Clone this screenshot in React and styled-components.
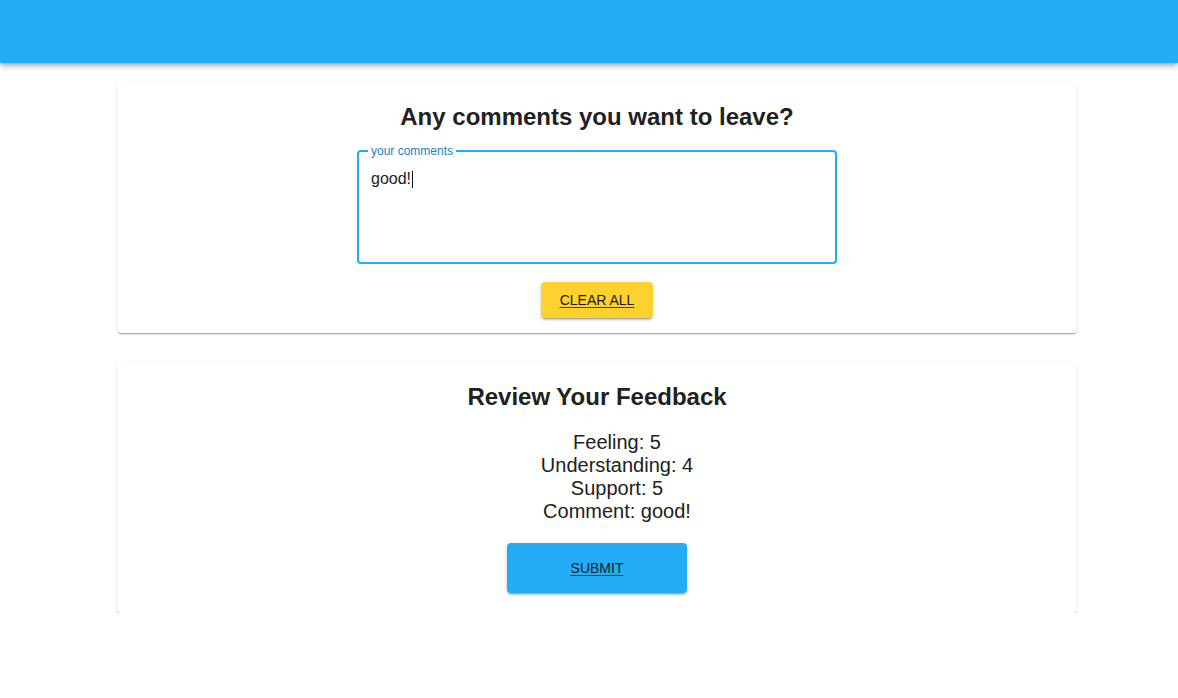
import React from "react";
import styled, { createGlobalStyle } from "styled-components";

const Global = createGlobalStyle`
  html, body { margin: 0; padding: 0; background: #fff; }
  body { font-family: "Liberation Sans", Arial, Helvetica, sans-serif; color: #212121; }
`;

const Header = styled.header`
  height: 63px;
  background: #24adf6;
  box-shadow: 0 2px 4px -1px rgba(0,0,0,0.2), 0 4px 5px 0 rgba(0,0,0,0.14), 0 1px 10px 0 rgba(0,0,0,0.12);
`;

const Main = styled.main`
  width: 960px;
  margin: 20px auto 0;
  padding-left: 16px;
  display: flex;
  flex-direction: column;
  gap: 30px;
`;

const Card = styled.section`
  background: #fff;
  border-radius: 4px;
  box-shadow: 0 2px 1px -1px rgba(0,0,0,0.2), 0 1px 1px 0 rgba(0,0,0,0.14), 0 1px 3px 0 rgba(0,0,0,0.12);
  height: 250px;
  box-sizing: border-box;
  padding-top: ${p => p.$pt}px;
  display: flex;
  flex-direction: column;
  align-items: center;
`;

const Title = styled.h2`
  margin: 0;
  font-size: 24px;
  font-weight: 700;
  line-height: 28px;
  color: #212121;
`;

const Field = styled.fieldset`
  margin: 15px 0 0;
  width: 480px;
  height: 118px;
  box-sizing: border-box;
  border: 2px solid #24adf6;
  border-radius: 4px;
  padding: 0 12px;
  position: relative;
`;

const Legend = styled.legend`
  font-size: 12px;
  color: #1f7fb8;
  padding: 0 3px;
  margin-left: -3px;
  line-height: 10px;
`;

const Value = styled.div`
  font-size: 16px;
  line-height: 20px;
  margin-top: 13px;
  color: #212121;
  display: flex;
  align-items: center;
`;

const Caret = styled.span`
  display: inline-block;
  width: 1px;
  height: 17px;
  background: #111;
  margin-left: 1px;
`;

const Button = styled.button`
  margin-top: ${p => p.$mt}px;
  width: ${p => p.$w}px;
  height: ${p => p.$h}px;
  border: none;
  border-radius: 4px;
  background: ${p => p.$bg};
  font-family: "Liberation Sans", Arial, sans-serif;
  font-size: 14px;
  color: #1a1a1a;
  text-decoration: underline;
  text-decoration-color: #551a8b;
  text-underline-offset: 2px;
  box-shadow: 0 3px 1px -2px rgba(0,0,0,0.2), 0 2px 2px 0 rgba(0,0,0,0.14), 0 1px 5px 0 rgba(0,0,0,0.12);
  cursor: pointer;
  padding: 0;
`;

const Lines = styled.div`
  margin-top: 20px;
  margin-left: 40px;
  display: flex;
  flex-direction: column;
  align-items: center;
  font-size: 20px;
  line-height: 23px;
  color: #212121;
`;

export default function App() {
  return (
    <>
      <Global />
      <Header />
      <Main>
        <Card $pt={20}>
          <Title>Any comments you want to leave?</Title>
          <Field>
            <Legend>your comments</Legend>
            <Value>good!<Caret /></Value>
          </Field>
          <Button $mt={18} $w={112} $h={36} $bg="#fdd22f">CLEAR ALL</Button>
        </Card>
        <Card $pt={20}>
          <Title>Review Your Feedback</Title>
          <Lines>
            <div>Feeling: 5</div>
            <div>Understanding: 4</div>
            <div>Support: 5</div>
            <div>Comment: good!</div>
          </Lines>
          <Button $mt={20} $w={180} $h={50} $bg="#24adf6">SUBMIT</Button>
        </Card>
      </Main>
    </>
  );
}
